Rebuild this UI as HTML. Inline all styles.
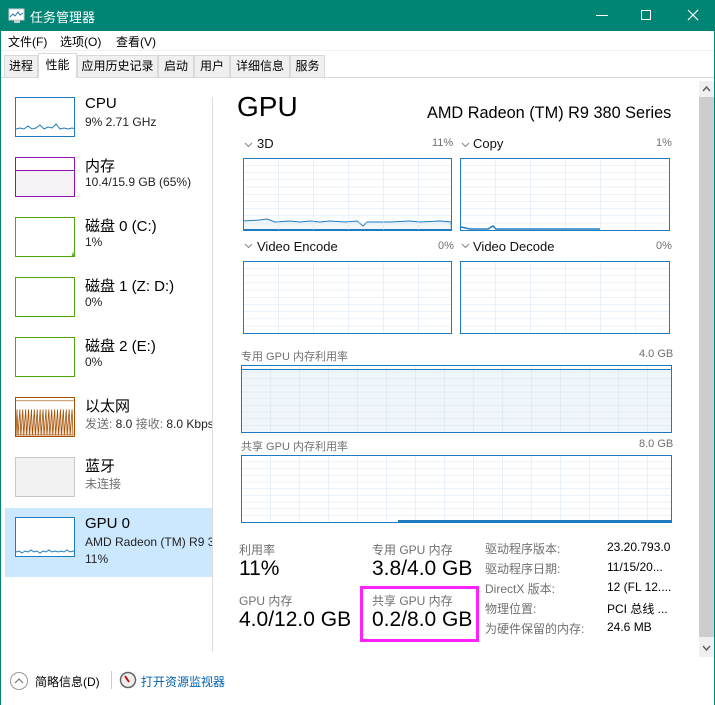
<!DOCTYPE html>
<html><head><meta charset="utf-8"><style>
*{margin:0;padding:0;box-sizing:border-box}
body{width:715px;height:705px;position:relative;background:#fff;font-family:"Liberation Sans","Noto Sans CJK SC",sans-serif;overflow:hidden;color:#000}
.a{position:absolute;white-space:nowrap}
.tb{left:0;top:0;width:715px;height:31px;background:#008575}
.tab{position:absolute;top:55px;height:22px;border:1px solid #d9d9d9;border-bottom:none;background:#f0f0f0;font-size:12px;line-height:20px;text-align:center}
.th{position:absolute;left:15px;width:60px;height:40px;border:1px solid}
.lt{font-size:15px;left:85px}
.ls{font-size:12px;left:85px;color:#222}
.g{font-size:12px;color:#707070}
.gl{font-size:13px;color:#111}
.sl{font-size:12px;color:#707070}
.sv{font-size:21px}
.rl{font-size:12px;color:#707070;left:485px}
.rv{font-size:12px;left:607px}
</style></head><body>
<div class="a tb"></div>
<svg class="a" style="left:8px;top:8px" width="18" height="16"><rect x="1" y="1" width="15" height="11" fill="#fff" stroke="#ccc"/><polyline points="2,9 5,6 7,8 10,4 12,7 15,5" fill="none" stroke="#2a7ab0" stroke-width="1"/><rect x="6" y="12" width="6" height="3" fill="#ccc"/></svg>
<div class="a" style="left:30px;top:7px;font-size:13px;color:#fff">任务管理器</div>
<div class="a" style="left:596px;top:15px;width:12px;height:1px;background:#fff"></div>
<div class="a" style="left:641px;top:10px;width:10px;height:10px;border:1px solid #fff"></div>
<svg class="a" style="left:687px;top:9px" width="12" height="12"><path d="M1 1L11 11M11 1L1 11" stroke="#fff" stroke-width="1.2"/></svg>
<div class="a" style="left:0;top:31px;width:1px;height:674px;background:#008575"></div>
<div class="a" style="left:714px;top:31px;width:1px;height:674px;background:#008575"></div>
<div class="a" style="left:8px;top:33px;font-size:12px">文件(F)</div>
<div class="a" style="left:60px;top:33px;font-size:12px">选项(O)</div>
<div class="a" style="left:116px;top:33px;font-size:12px">查看(V)</div>
<div class="a" style="left:1px;top:50px;width:713px;height:27px;background:#fff;border-top:1px solid #f0f0f0"></div>
<div class="a" style="left:1px;top:77px;width:713px;height:1px;background:#d9d9d9"></div>
<div class="tab" style="left:4px;width:34px">进程</div>
<div class="tab" style="left:38px;width:39px;top:53px;height:25px;background:#fff;line-height:22px">性能</div>
<div class="tab" style="left:77px;width:81px">应用历史记录</div>
<div class="tab" style="left:158px;width:36px">启动</div>
<div class="tab" style="left:194px;width:36px">用户</div>
<div class="tab" style="left:230px;width:60px">详细信息</div>
<div class="tab" style="left:290px;width:35px">服务</div>

<!-- scrollbar -->
<div class="a" style="left:699px;top:81px;width:15px;height:576px;background:#f0f0f0"></div>
<div class="a" style="left:699px;top:97px;width:15px;height:540px;background:#cdcdcd"></div>
<svg class="a" style="left:702px;top:85px" width="9" height="8"><path d="M1 6L4.5 2L8 6" fill="none" stroke="#606060" stroke-width="1.5"/></svg>
<svg class="a" style="left:702px;top:644px" width="9" height="8"><path d="M1 2L4.5 6L8 2" fill="none" stroke="#606060" stroke-width="1.5"/></svg>

<!-- left panel -->
<div class="a" style="left:212px;top:97px;width:1px;height:555px;background:#dcdcdc"></div>
<div class="a" style="left:5px;top:508px;width:207px;height:69px;background:#cce8ff"></div>
<svg class="th" style="top:97px;border-color:#1f7bc0;background:#fff"><polyline points="0,31 4,30 8,31 12,28 16,31 20,30 24,27 28,31 32,29 36,30 40,26 44,31 48,30 52,31 56,30 60,31" fill="none" stroke="#1f7bc0" stroke-width="1"/></svg>
<div class="a lt" style="top:95px">CPU</div><div class="a ls" style="top:115px">9% 2.71 GHz</div>
<div class="th" style="top:157px;border-color:#8b12ae;background:#f4f2f4"><div style="height:13px;background:#fff;border-bottom:1px solid #8b12ae"></div></div>
<div class="a lt" style="top:155px">内存</div><div class="a ls" style="top:175px">10.4/15.9 GB (65%)</div>
<svg class="th" style="top:217px;border-color:#4da60c;background:#fff"><path d="M56 38 L57 33 L58 38Z" fill="#4da60c"/></svg>
<div class="a lt" style="top:215px">磁盘 0 (C:)</div><div class="a ls" style="top:235px">1%</div>
<div class="th" style="top:277px;border-color:#4da60c"></div>
<div class="a lt" style="top:275px">磁盘 1 (Z: D:)</div><div class="a ls" style="top:295px">0%</div>
<div class="th" style="top:337px;border-color:#4da60c"></div>
<div class="a lt" style="top:335px">磁盘 2 (E:)</div><div class="a ls" style="top:355px">0%</div>
<svg class="th" style="top:397px;border-color:#a74f01;background:#fff" viewBox="0 0 60 40" preserveAspectRatio="none"><line x1="0" y1="3" x2="60" y2="3" stroke="#a74f01" stroke-width="0.7"/><path d="M0 39 L1 12 L2 39 L4 12 L5 39 L7 12 L8 39 L10 12 L11 39 L13 12 L14 39 L16 12 L17 39 L19 12 L20 39 L22 12 L23 39 L25 12 L26 39 L28 12 L29 39 L31 12 L32 39 L34 12 L35 39 L37 12 L38 39 L40 12 L41 39 L43 12 L44 39 L46 12 L47 39 L49 12 L50 39 L52 12 L53 39 L55 12 L56 39 L58 12 L59 39Z" fill="#f3e6d9" stroke="#a74f01" stroke-width="0.8"/></svg>
<div class="a lt" style="top:395px">以太网</div><div class="a ls" style="top:415px;width:127px;overflow:hidden"><span style="color:#707070">发送:</span> 8.0 <span style="color:#707070">接收:</span> 8.0 Kbps</div>
<div class="th" style="top:457px;border-color:#c8c8c8;background:#f2f2f2"></div>
<div class="a lt" style="top:455px">蓝牙</div><div class="a ls" style="top:475px;color:#707070">未连接</div>
<svg class="th" style="top:517px;border-color:#1f7bc0;background:#fff"><polyline points="0,34 3,33 6,35 9,33 12,34 15,32 18,34 21,33 24,35 27,33 30,34 33,32 36,34 39,33 42,34 45,33 48,34 51,32 54,34 57,33 60,34" fill="none" stroke="#1f7bc0" stroke-width="1"/></svg>
<div class="a lt" style="top:515px">GPU 0</div><div class="a ls" style="top:535px;width:127px;overflow:hidden">AMD Radeon (TM) R9 380 Series</div><div class="a ls" style="top:552px">11%</div>

<!-- right panel -->
<div class="a" style="left:237px;top:91px;font-size:28px">GPU</div>
<div class="a" style="left:427px;top:104px;font-size:16.3px">AMD Radeon (TM) R9 380 Series</div>

<svg class="a" style="left:0;top:0" width="715" height="705">
<defs>
<pattern id="p1" x="243" y="158" width="35" height="7.2" patternUnits="userSpaceOnUse"><path d="M0 0V7.2M0 0H35" stroke="#d3e5f4" stroke-width="1" fill="none"/></pattern>
<pattern id="p2" x="460" y="158" width="35" height="7.2" patternUnits="userSpaceOnUse"><path d="M0 0V7.2M0 0H35" stroke="#d3e5f4" stroke-width="1" fill="none"/></pattern>
<pattern id="p3" x="243" y="261" width="35" height="7.2" patternUnits="userSpaceOnUse"><path d="M0 0V7.2M0 0H35" stroke="#d3e5f4" stroke-width="1" fill="none"/></pattern>
<pattern id="p4" x="460" y="261" width="35" height="7.2" patternUnits="userSpaceOnUse"><path d="M0 0V7.2M0 0H35" stroke="#d3e5f4" stroke-width="1" fill="none"/></pattern>
<pattern id="p5" x="241" y="365" width="29" height="6.7" patternUnits="userSpaceOnUse"><path d="M0 0V6.7M0 0H29" stroke="#d3e5f4" stroke-width="1" fill="none"/></pattern>
<pattern id="p6" x="241" y="455" width="29" height="6.7" patternUnits="userSpaceOnUse"><path d="M0 0V6.7M0 0H29" stroke="#d3e5f4" stroke-width="1" fill="none"/></pattern>
</defs>
<rect x="241.5" y="369" width="430" height="63" fill="#f1f6fa"/>
<path d="M243.5 221 L260 220 L267 219 L275 222 L290 221 L300 222 L310 221 L320 222 L330 221 L345 222 L357 221 L363 226 L367 222 L390 222 L410 221 L420 222 L440 221 L451 222 L451.5 229.5 L243.5 229.5Z" fill="#f1f6fa" stroke="#1f7bc0" stroke-width="1"/>
<rect x="243.5" y="158.5" width="208" height="72" fill="url(#p1)" stroke="#1f7bc0"/>
<rect x="460.5" y="158.5" width="209" height="72" fill="url(#p2)" stroke="#1f7bc0"/>
<path d="M461 227 L470 229 L488 229 L493 226 L496 229 L520 229 L540 229 L566 229 L600 229" fill="none" stroke="#1f7bc0" stroke-width="1.5"/>
<rect x="243.5" y="261.5" width="208" height="72" fill="url(#p3)" stroke="#1f7bc0"/>
<rect x="460.5" y="261.5" width="209" height="72" fill="url(#p4)" stroke="#1f7bc0"/>
<rect x="241.5" y="365.5" width="430" height="67" fill="url(#p5)" stroke="#1f7bc0"/>
<line x1="242" y1="369.5" x2="671" y2="369.5" stroke="#1f7bc0" stroke-width="1"/>
<rect x="241.5" y="455.5" width="430" height="67" fill="url(#p6)" stroke="#1f7bc0"/>
<line x1="398" y1="521" x2="671" y2="521" stroke="#1f7bc0" stroke-width="2"/>
<path d="M245 143L248.5 146.5L252 143M462 143L465.5 146.5L469 143M245 244L248.5 247.5L252 244M462 244L465.5 247.5L469 244" fill="none" stroke="#888" stroke-width="1"/>
</svg>
<div class="a gl" style="left:257px;top:136px">3D</div><div class="a g" style="left:432px;top:137px;font-size:11px">11%</div>
<div class="a gl" style="left:473px;top:136px">Copy</div><div class="a g" style="left:656px;top:137px;font-size:11px">1%</div>
<div class="a gl" style="left:257px;top:239px">Video Encode</div><div class="a g" style="left:438px;top:240px;font-size:11px">0%</div>
<div class="a gl" style="left:473px;top:239px">Video Decode</div><div class="a g" style="left:656px;top:240px;font-size:11px">0%</div>
<div class="a g" style="left:241px;top:348px;font-size:11px">专用 GPU 内存利用率</div><div class="a g" style="left:639px;top:348px;font-size:11px">4.0 GB</div>
<div class="a g" style="left:241px;top:438px;font-size:11px">共享 GPU 内存利用率</div><div class="a g" style="left:639px;top:438px;font-size:11px">8.0 GB</div>

<div class="a sl" style="left:239px;top:541px">利用率</div><div class="a sv" style="left:239px;top:557px">11%</div>
<div class="a sl" style="left:372px;top:541px">专用 GPU 内存</div><div class="a sv" style="left:372px;top:557px">3.8/4.0 GB</div>
<div class="a sl" style="left:239px;top:592px">GPU 内存</div><div class="a sv" style="left:239px;top:608px">4.0/12.0 GB</div>
<div class="a" style="left:360px;top:586px;width:119px;height:56px;border:3px solid #ff22ff"></div>
<div class="a sl" style="left:372px;top:592px">共享 GPU 内存</div><div class="a sv" style="left:372px;top:608px">0.2/8.0 GB</div>
<div class="a rl" style="top:540px">驱动程序版本:</div><div class="a rv" style="top:540px">23.20.793.0</div>
<div class="a rl" style="top:560px">驱动程序日期:</div><div class="a rv" style="top:560px">11/15/20...</div>
<div class="a rl" style="top:580px">DirectX 版本:</div><div class="a rv" style="top:580px">12 (FL 12....</div>
<div class="a rl" style="top:600px">物理位置:</div><div class="a rv" style="top:600px">PCI 总线 ...</div>
<div class="a rl" style="top:620px">为硬件保留的内存:</div><div class="a rv" style="top:620px">24.6 MB</div>

<!-- footer -->
<svg class="a" style="left:9px;top:671px" width="20" height="20"><circle cx="10" cy="10" r="8.5" fill="none" stroke="#999"/><path d="M6 12L10 8L14 12" fill="none" stroke="#777" stroke-width="1.2"/></svg>
<div class="a" style="left:35px;top:673px;font-size:12px">简略信息(D)</div>
<div class="a" style="left:111px;top:671px;width:1px;height:18px;background:#ccc"></div>
<svg class="a" style="left:119px;top:671px" width="18" height="18"><circle cx="9" cy="9" r="7.5" fill="#eee" stroke="#666" stroke-width="1.5"/><path d="M6 5L10 11" stroke="#c00" stroke-width="1.8"/></svg>
<div class="a" style="left:141px;top:673px;font-size:12px;color:#0063b1">打开资源监视器</div>
</body></html>
